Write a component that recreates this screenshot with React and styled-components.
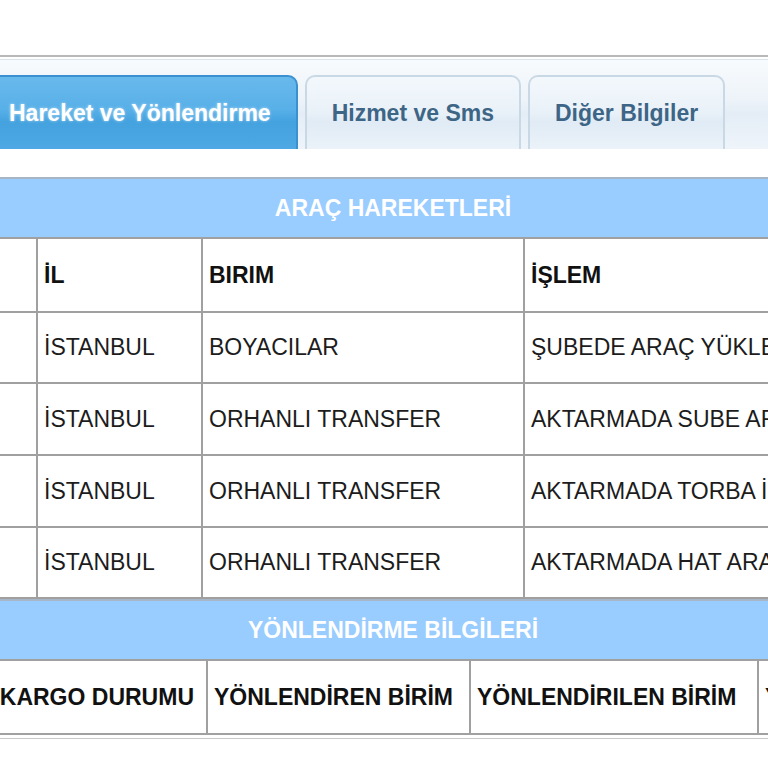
import React from 'react';
import styled, { createGlobalStyle, css } from 'styled-components';

const Global = createGlobalStyle`
  html, body {
    margin: 0;
    padding: 0;
    background: #fff;
    overflow: hidden;
  }
  body {
    font-family: "Liberation Sans", Arial, sans-serif;
  }
`;

const Page = styled.div`
  width: 822px;
  margin-left: -18px;
  padding-top: 55px;
`;

const TabBar = styled.div`
  border-top: 2px solid #b9b9b9;
  padding-top: 2px;
`;

const TabStrip = styled.div`
  display: flex;
  align-items: flex-end;
  gap: 7px;
  height: 90px;
  box-sizing: border-box;
  padding-top: 16px;
  border-top: 1px solid #dde5ec;
  background: linear-gradient(#f8fbfd 0%, #edf3f9 45%, #e4edf6 60%, #eef4fa 100%);
`;

const Tab = styled.div`
  height: 74px;
  box-sizing: border-box;
  padding: 0 25px;
  display: flex;
  align-items: center;
  font-size: 23px;
  font-weight: bold;
  border-radius: 10px 10px 0 0;
  white-space: nowrap;

  ${p => p.$active ? css`
    color: #fff;
    background: linear-gradient(#68b9ec 0%, #58b0e8 45%, #44a2df 62%, #4da8e3 100%);
    border: 2px solid #3b90cf;
    border-bottom: none;
    text-shadow: 0 0 3px rgba(255,255,255,0.6);
  ` : css`
    color: #3d6586;
    background: linear-gradient(#f3f8fc 0%, #e9f1f8 50%, #e0ebf5 62%, #ebf2f9 100%);
    border: 2px solid #c9d8e5;
    border-bottom: none;
  `}
`;

const Gap = styled.div`
  height: 28px;
`;

const Table = styled.table`
  width: 822px;
  table-layout: fixed;
  border-collapse: collapse;
  font-size: 23px;
  color: #1c1c1c;
`;

const Band = styled.td`
  height: 58px;
  padding: 0;
  background: #99ccff;
  color: #fff;
  font-weight: bold;
  text-align: center;
  border-top: 2px solid #a6b6c6;
  border-bottom: 2px solid #a0a0a0;
`;

const Cell = styled.td`
  height: ${p => p.$h || 70}px;
  padding: 0 0 0 6px;
  border: 2px solid #a0a0a0;
  white-space: nowrap;
  overflow: hidden;
  font-weight: ${p => (p.$head ? 'bold' : 'normal')};
  color: ${p => (p.$head ? '#111' : '#1c1c1c')};
`;

const Bottom = styled.div`
  margin-top: 3px;
  border-top: 1px solid #c8c8c8;
`;

const moves = [
  ['İSTANBUL', 'BOYACILAR', 'ŞUBEDE ARAÇ YÜKLEME', 69],
  ['İSTANBUL', 'ORHANLI TRANSFER', 'AKTARMADA SUBE ARAÇ', 70],
  ['İSTANBUL', 'ORHANLI TRANSFER', 'AKTARMADA TORBA İNDİRME', 70],
  ['İSTANBUL', 'ORHANLI TRANSFER', 'AKTARMADA HAT ARAÇ', 69],
];

export default function App() {
  return (
    <Page>
      <Global />
      <TabBar>
        <TabStrip>
          <Tab $active>Hareket ve Yönlendirme</Tab>
          <Tab>Hizmet ve Sms</Tab>
          <Tab>Diğer Bilgiler</Tab>
        </TabStrip>
      </TabBar>
      <Gap />
      <Table>
        <colgroup>
          <col style={{ width: 54 }} />
          <col style={{ width: 165 }} />
          <col style={{ width: 322 }} />
          <col />
        </colgroup>
        <tbody>
          <tr>
            <Band colSpan={4}>ARAÇ HAREKETLERİ</Band>
          </tr>
          <tr>
            <Cell $head $h={72}></Cell>
            <Cell $head $h={72}>İL</Cell>
            <Cell $head $h={72}>BIRIM</Cell>
            <Cell $head $h={72}>İŞLEM</Cell>
          </tr>
          {moves.map((r, i) => (
            <tr key={i}>
              <Cell $h={r[3]}></Cell>
              <Cell $h={r[3]}>{r[0]}</Cell>
              <Cell $h={r[3]}>{r[1]}</Cell>
              <Cell $h={r[3]}>{r[2]}</Cell>
            </tr>
          ))}
        </tbody>
      </Table>
      <Table>
        <colgroup>
          <col style={{ width: 224 }} />
          <col style={{ width: 263 }} />
          <col style={{ width: 288 }} />
          <col />
        </colgroup>
        <tbody>
          <tr>
            <Band colSpan={4}>YÖNLENDİRME BİLGİLERİ</Band>
          </tr>
          <tr>
            <Cell $head $h={72} style={{ textAlign: 'right', paddingRight: 12 }}>KARGO DURUMU</Cell>
            <Cell $head $h={72}>YÖNLENDİREN BİRİM</Cell>
            <Cell $head $h={72}>YÖNLENDİRILEN BİRİM</Cell>
            <Cell $head $h={72}>YÖNLENDİRME</Cell>
          </tr>
        </tbody>
      </Table>
      <Bottom />
    </Page>
  );
}
